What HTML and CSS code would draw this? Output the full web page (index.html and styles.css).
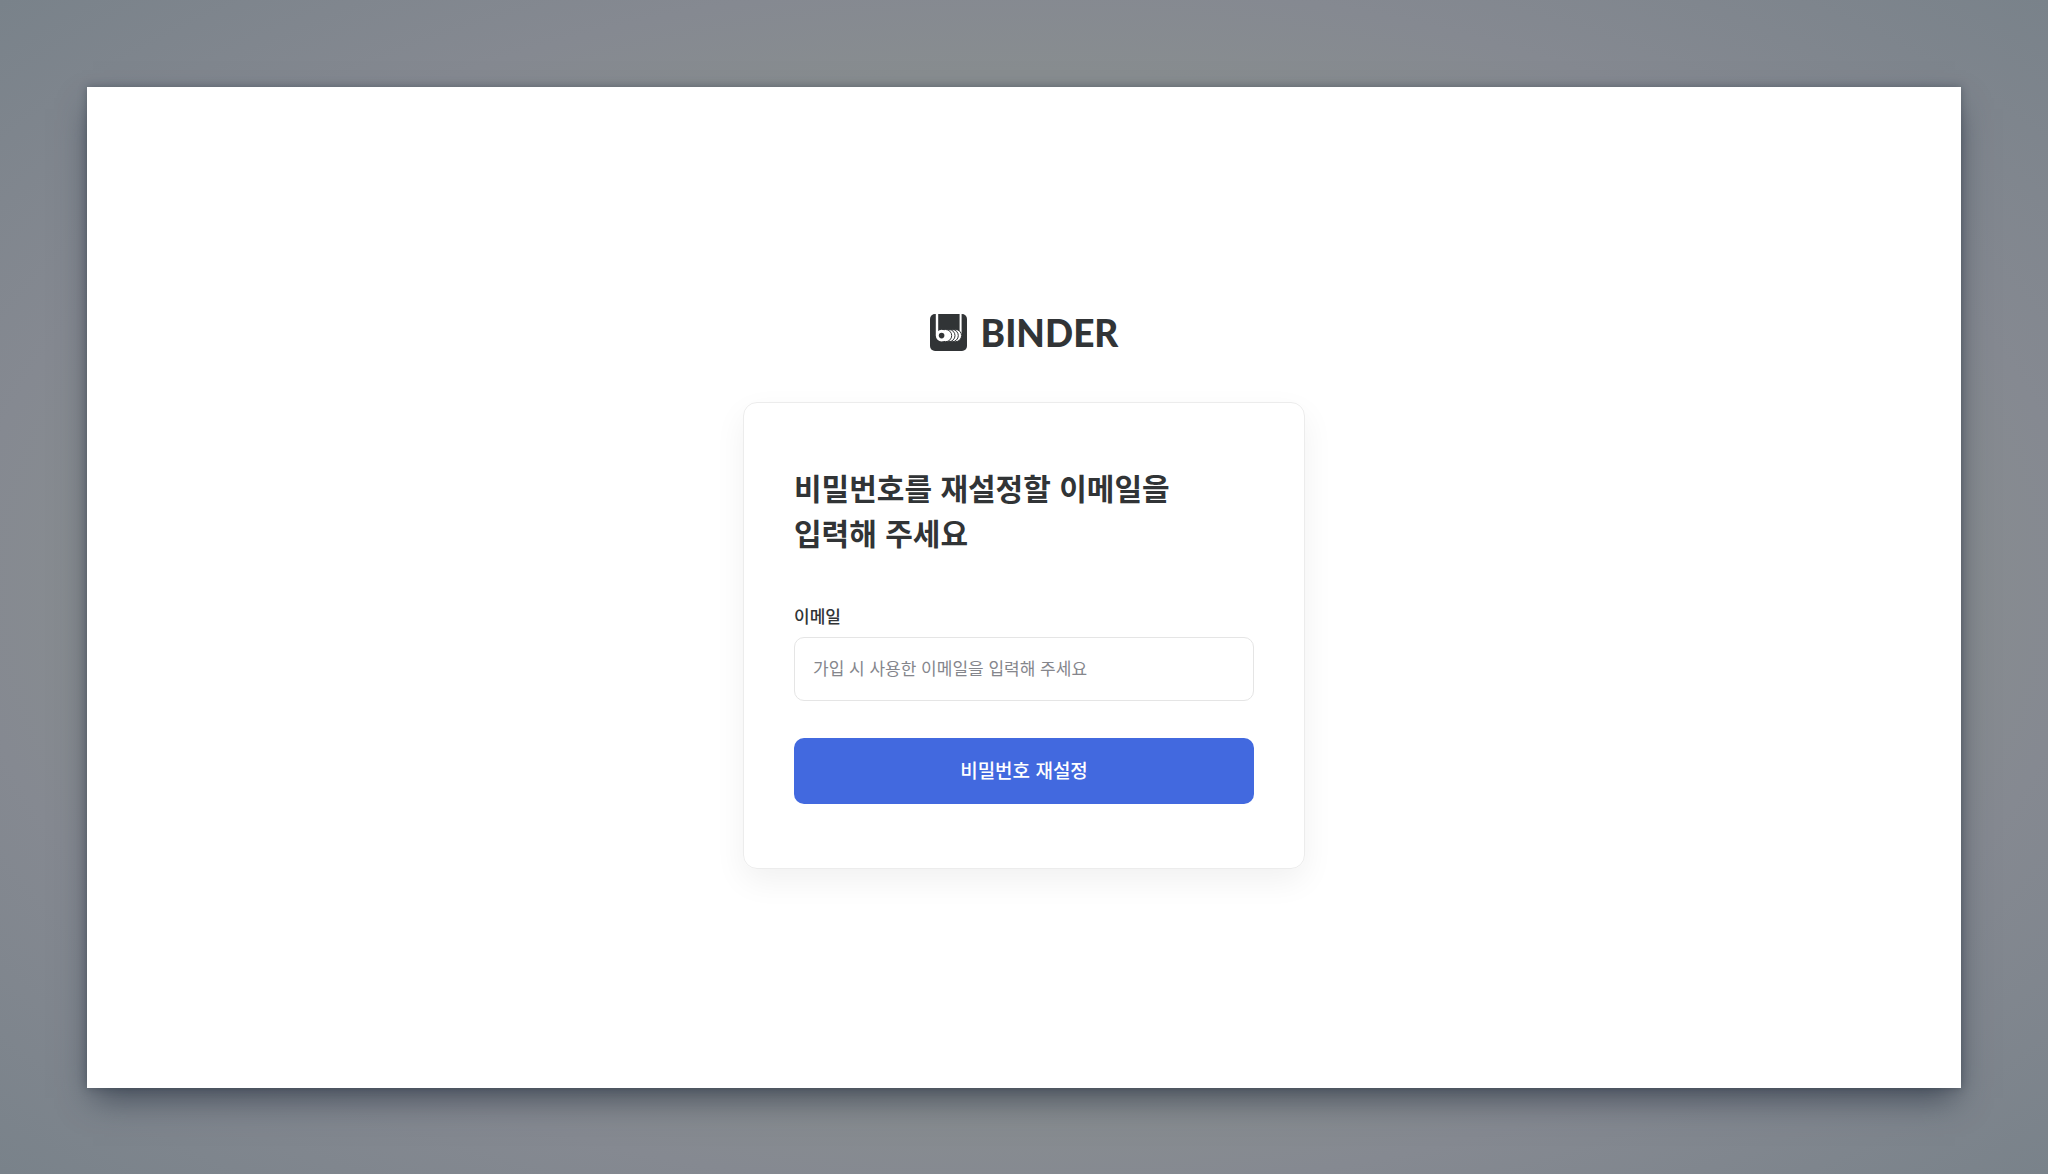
FILE: index.html
```html
<!DOCTYPE html>
<html lang="ko">
<head>
    <meta charset="UTF-8">
    <meta name="viewport" content="width=device-width, initial-scale=1.0">
    <title>BINDER</title>
    <link rel="stylesheet" href="styles.css">
</head>
<body>

    <main class="window">
        <a class="logo" href="#">
            <svg class="logo-icon" viewBox="0 0 37 37" aria-hidden="true">
                <path fill="#313436" d="M5 0H32a5 5 0 0 1 5 5V32a5 5 0 0 1-5 5H5a5 5 0 0 1-5-5V5a5 5 0 0 1 5-5z"/>
                <path fill="#fff" d="M5.800 0h2.400v21h-2.400zM29.600 0h2v22h-2z"/>
                <g fill="#fff" stroke="#313436" stroke-width="1">
                    <circle cx="25.500" cy="21.600" r="6.100"/>
                    <circle cx="22.200" cy="21.600" r="6.100"/>
                    <circle cx="18.900" cy="21.600" r="6.100"/>
                    <circle cx="15.600" cy="21.600" r="6.100"/>
                </g>
                <circle cx="11.600" cy="21.600" r="5.800" fill="#fff"/>
                <circle cx="11.600" cy="21.600" r="2.800" fill="#313436"/>
            </svg>
            <span class="logo-text">BINDER</span>
        </a>

        <form class="card">
            <h1 class="title">비밀번호를 재설정할 이메일을<br>입력해 주세요</h1>
            <label class="label" for="email">이메일</label>
            <input class="input" type="email" id="email" placeholder="가입 시 사용한 이메일을 입력해 주세요">
            <button class="button" type="submit">비밀번호 재설정</button>
        </form>
    </main>

</body>
</html>
```
FILE: styles.css
```css
* {
    box-sizing: border-box;
}
body {
    margin: 0;
    min-height: 100vh;
    padding: 87px 87px 86px;
    display: flex;
    font-family: "Noto Sans CJK KR", "Noto Sans", sans-serif;
    color: #313436;
    background: radial-gradient(ellipse at center, #8a8f8f 0%, #888d90 62%, #858991 73%, #79828a 100%);
}
.window {
    flex: 1;
    display: flex;
    flex-direction: column;
    align-items: center;
    justify-content: center;
    padding-top: 2px;
    background: white;
    box-shadow: 0 0 8px rgba(40, 50, 65, 0.4), 0 16px 32px -6px rgba(40, 50, 65, 0.7);
}
.logo {
    display: flex;
    align-items: center;
    gap: 14px;
    margin-bottom: 45px;
    color: #313436;
    text-decoration: none;
}
.logo-icon {
    width: 37px;
    height: 37px;
}
.logo-text {
    font-family: Lato, sans-serif;
    font-size: 37px;
    font-weight: 900;
    line-height: 48px;
}
.card {
    width: 100%;
    max-width: 562px;
    padding: 62px 50px 64px;
    display: flex;
    flex-direction: column;
    border: 1px solid #ececec;
    border-radius: 14px;
    box-shadow: 0 12px 32px rgba(0, 0, 0, 0.06);
}
.title {
    margin: 0 0 48px;
    font-size: 30px;
    font-weight: 700;
    line-height: 45px;
}
.label {
    margin-bottom: 8px;
    font-size: 17px;
    font-weight: 500;
    line-height: 26px;
}
.input {
    height: 64px;
    margin-bottom: 37px;
    padding: 0 18px 2px;
    border: 1px solid #e5e5e5;
    border-radius: 10px;
    font-family: inherit;
    font-size: 17px;
    color: #313436;
    background: white;
}
.input::placeholder {
    color: #85868c;
}
.button {
    height: 66px;
    padding: 0 0 2px;
    border: none;
    border-radius: 10px;
    font-family: inherit;
    font-size: 19px;
    font-weight: 500;
    color: white;
    background: #4269df;
    cursor: pointer;
}
```
